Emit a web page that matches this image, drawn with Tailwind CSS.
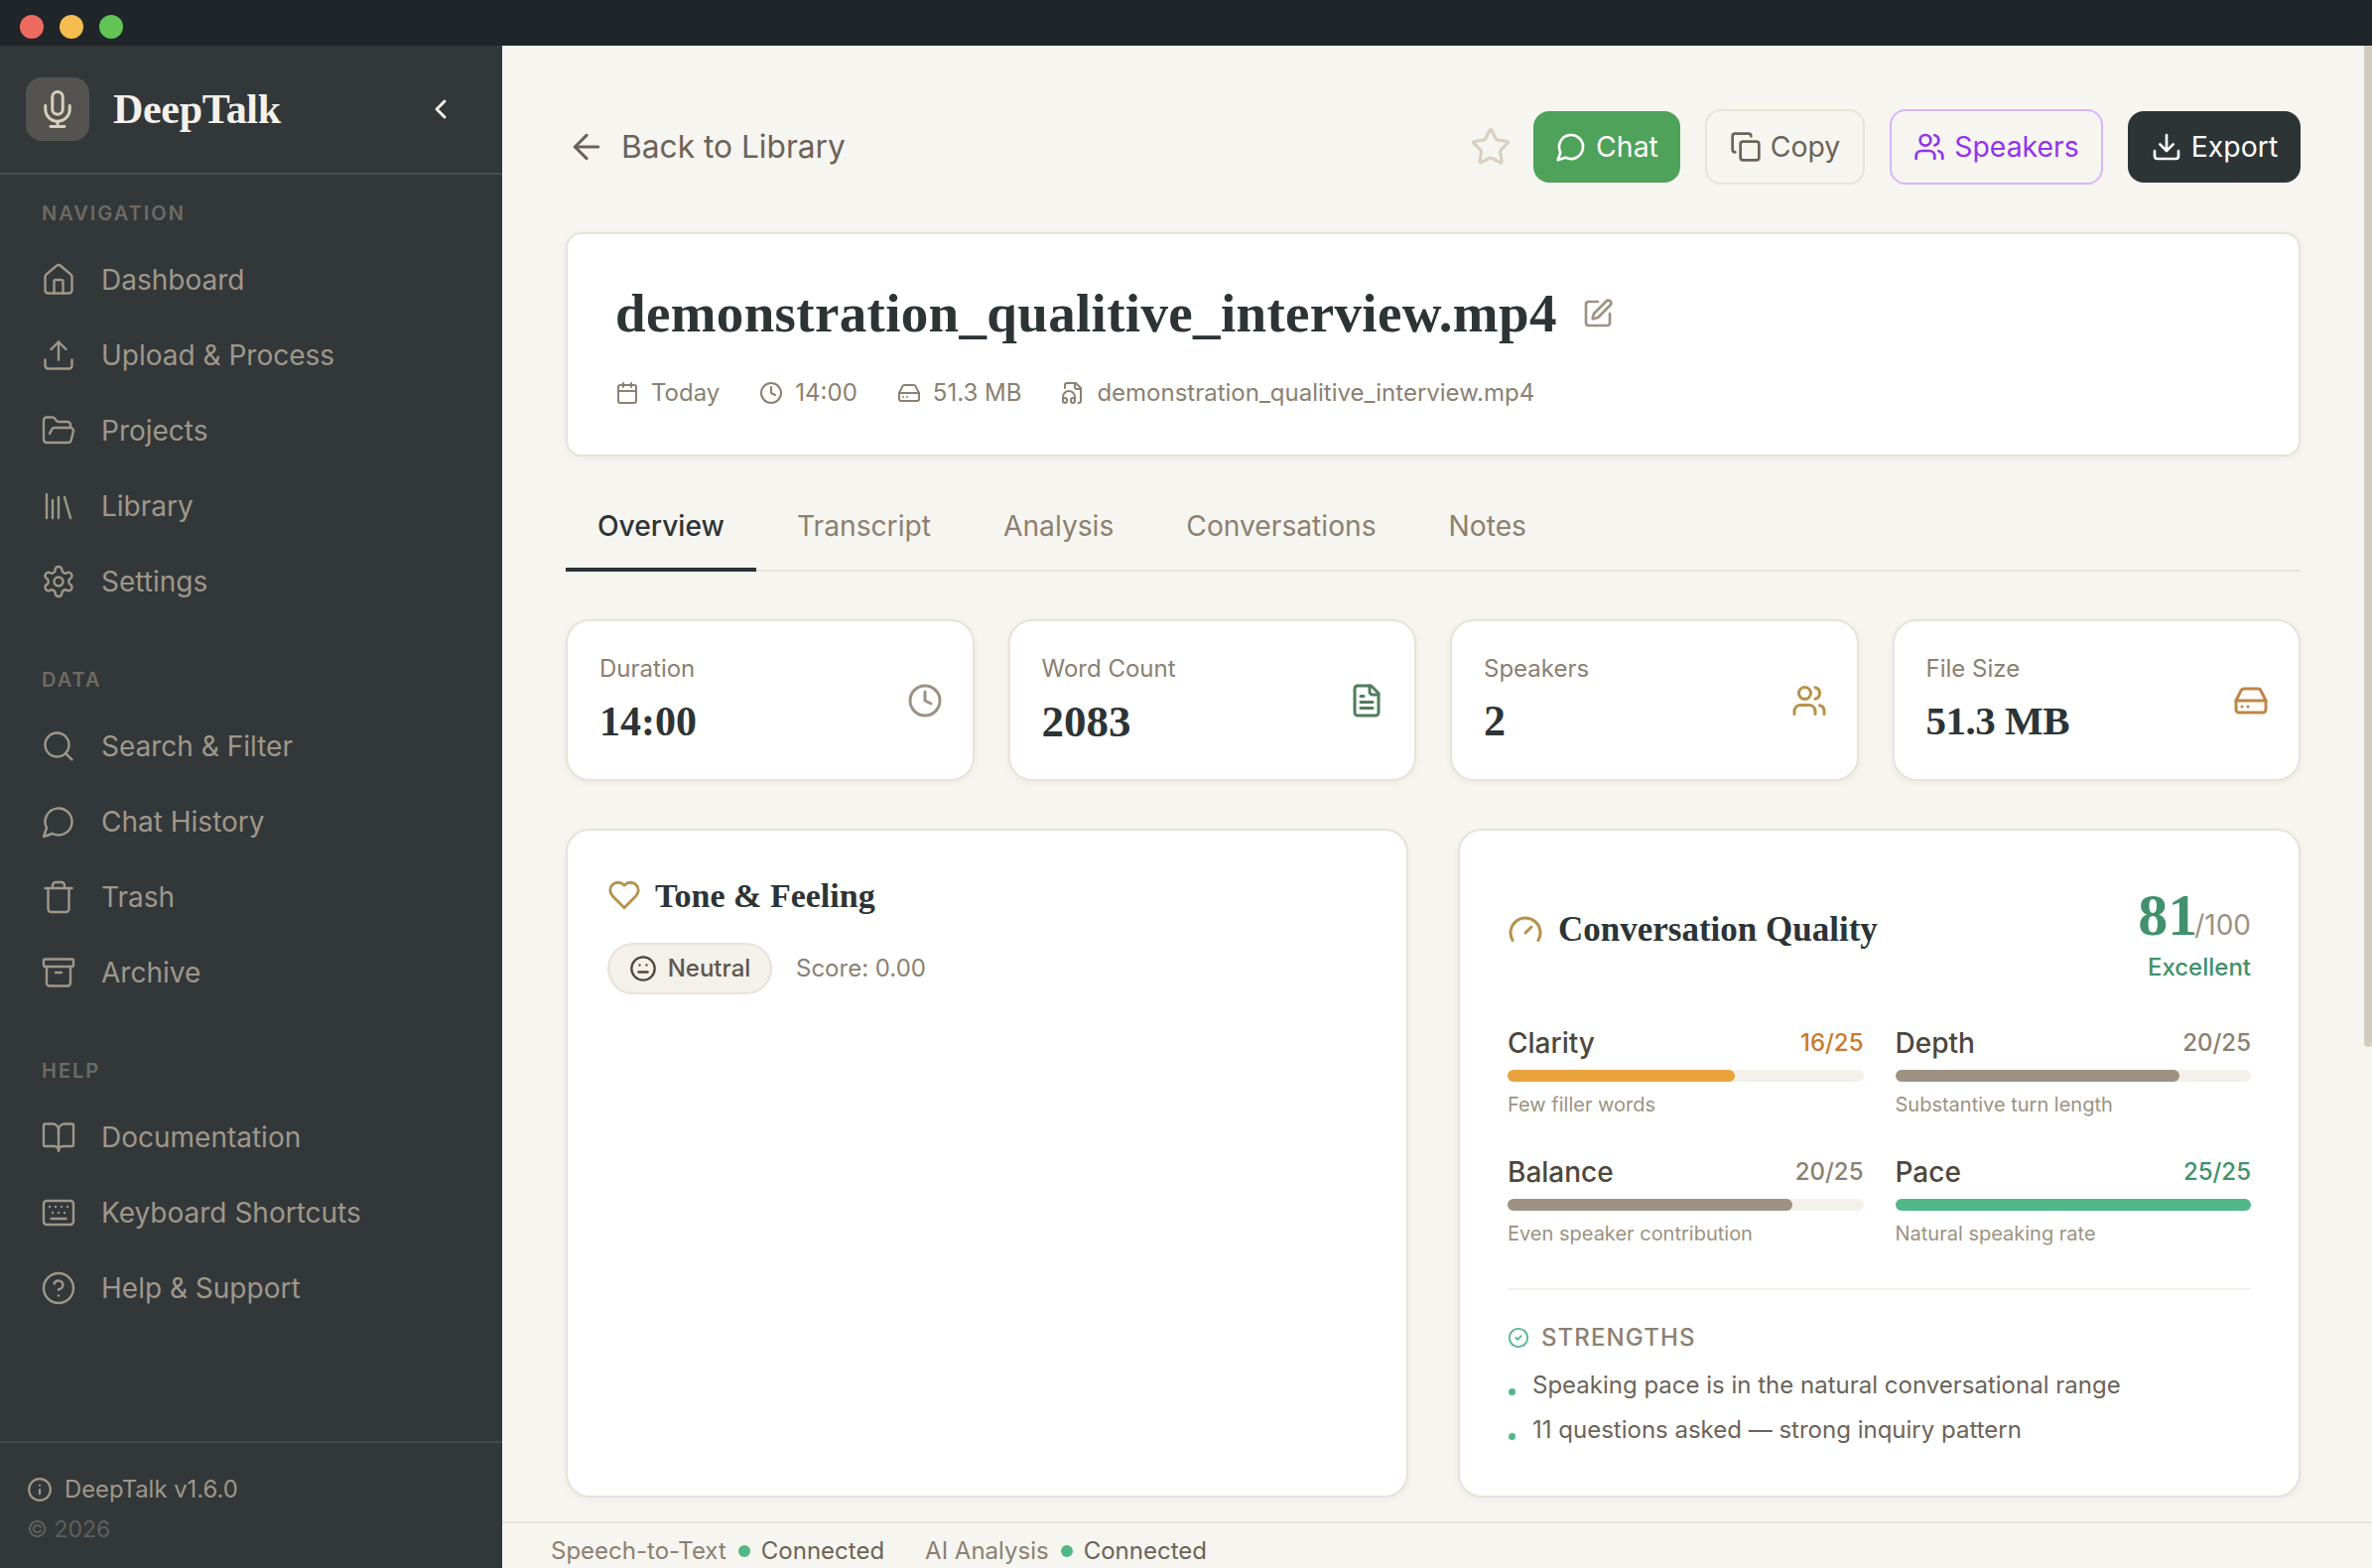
<!DOCTYPE html>
<html lang="en">
<head>
  <meta charset="UTF-8" />
  <title>DeepTalk</title>
  <script src="https://cdn.jsdelivr.net/npm/@tailwindcss/browser@4"></script>
</head>
<body class="w-[2390px] h-[1580px] overflow-hidden bg-[#f7f5f0] font-['Inter',sans-serif]">
  <!-- Title bar -->
  <div class="h-[46px] bg-[#1f2528] flex items-start gap-[16px] pl-[20px] pt-[15px]">
    <span class="w-[24px] h-[24px] rounded-full bg-[#ee6a5f]"></span>
    <span class="w-[24px] h-[24px] rounded-full bg-[#f5bd4f]"></span>
    <span class="w-[24px] h-[24px] rounded-full bg-[#61c454]"></span>
  </div>

  <div class="flex h-[1534px]">
    <!-- Sidebar -->
    <aside class="w-[506px] shrink-0 bg-[#32373a] flex flex-col">
      <div class="h-[130px] shrink-0 border-b-2 border-[#464b4e] flex items-center pl-[26px] pr-[46px]">
        <div class="w-[64px] h-[64px] rounded-[16px] bg-[#54534f] flex items-center justify-center">
          <svg class="w-[42px] h-[42px] text-[#d8cfbc]" viewBox="0 0 24 24" fill="none" stroke="currentColor" stroke-width="1.7" stroke-linecap="round" stroke-linejoin="round"><path d="M12 2a3 3 0 0 0-3 3v7a3 3 0 0 0 6 0V5a3 3 0 0 0-3-3Z"/><path d="M19 10v2a7 7 0 0 1-14 0v-2"/><path d="M12 19v3"/><path d="M8 22h8"/></svg>
        </div>
        <span class="ml-[24px] flex-1 font-['Liberation_Serif',serif] font-bold text-[42px] tracking-[-0.3px] leading-none text-[#f5f1ea]">DeepTalk</span>
        <svg class="w-[32px] h-[32px] text-[#f5f1ea]" viewBox="0 0 24 24" fill="none" stroke="currentColor" stroke-width="2.2" stroke-linecap="round" stroke-linejoin="round"><path d="m15 18-6-6 6-6"/></svg>
      </div>

      <nav class="flex-1 pt-[25px] text-[#a09789] text-[28px]">
        <div class="h-[28px] leading-[28px] pl-[42px] mb-[15px] text-[20px] font-semibold tracking-[2px] text-[#6e6a62]">NAVIGATION</div>
        <a class="h-[76px] flex items-center pl-[41px] gap-[25px]"><svg class="w-[36px] h-[36px]" viewBox="0 0 24 24" fill="none" stroke="currentColor" stroke-width="1.6" stroke-linecap="round" stroke-linejoin="round"><path d="M15 21v-8a1 1 0 0 0-1-1h-4a1 1 0 0 0-1 1v8"/><path d="M3 10a2 2 0 0 1 .709-1.528l7-5.999a2 2 0 0 1 2.582 0l7 5.999A2 2 0 0 1 21 10v9a2 2 0 0 1-2 2H5a2 2 0 0 1-2-2z"/></svg>Dashboard</a>
        <a class="h-[76px] flex items-center pl-[41px] gap-[25px]"><svg class="w-[36px] h-[36px]" viewBox="0 0 24 24" fill="none" stroke="currentColor" stroke-width="1.6" stroke-linecap="round" stroke-linejoin="round"><path d="M21 15v4a2 2 0 0 1-2 2H5a2 2 0 0 1-2-2v-4"/><path d="M17 8l-5-5-5 5"/><path d="M12 3v12"/></svg>Upload &amp; Process</a>
        <a class="h-[76px] flex items-center pl-[41px] gap-[25px]"><svg class="w-[36px] h-[36px]" viewBox="0 0 24 24" fill="none" stroke="currentColor" stroke-width="1.6" stroke-linecap="round" stroke-linejoin="round"><path d="m6 14 1.5-2.9A2 2 0 0 1 9.24 10H20a2 2 0 0 1 1.94 2.5l-1.54 6a2 2 0 0 1-1.95 1.5H4a2 2 0 0 1-2-2V5a2 2 0 0 1 2-2h3.9a2 2 0 0 1 1.69.9l.81 1.2a2 2 0 0 0 1.67.9H18a2 2 0 0 1 2 2v2"/></svg>Projects</a>
        <a class="h-[76px] flex items-center pl-[41px] gap-[25px]"><svg class="w-[36px] h-[36px]" viewBox="0 0 24 24" fill="none" stroke="currentColor" stroke-width="1.6" stroke-linecap="round" stroke-linejoin="round"><path d="m16 6 4 14"/><path d="M12 6v14"/><path d="M8 8v12"/><path d="M4 4v16"/></svg>Library</a>
        <a class="h-[76px] flex items-center pl-[41px] gap-[25px]"><svg class="w-[36px] h-[36px]" viewBox="0 0 24 24" fill="none" stroke="currentColor" stroke-width="1.6" stroke-linecap="round" stroke-linejoin="round"><path d="M12.22 2h-.44a2 2 0 0 0-2 2v.18a2 2 0 0 1-1 1.73l-.43.25a2 2 0 0 1-2 0l-.15-.08a2 2 0 0 0-2.73.73l-.22.38a2 2 0 0 0 .73 2.73l.15.1a2 2 0 0 1 1 1.72v.51a2 2 0 0 1-1 1.74l-.15.09a2 2 0 0 0-.73 2.73l.22.38a2 2 0 0 0 2.73.73l.15-.08a2 2 0 0 1 2 0l.43.25a2 2 0 0 1 1 1.73V20a2 2 0 0 0 2 2h.44a2 2 0 0 0 2-2v-.18a2 2 0 0 1 1-1.73l.43-.25a2 2 0 0 1 2 0l.15.08a2 2 0 0 0 2.73-.73l.22-.39a2 2 0 0 0-.73-2.73l-.15-.08a2 2 0 0 1-1-1.74v-.5a2 2 0 0 1 1-1.74l.15-.09a2 2 0 0 0 .73-2.73l-.22-.38a2 2 0 0 0-2.73-.73l-.15.08a2 2 0 0 1-2 0l-.43-.25a2 2 0 0 1-1-1.73V4a2 2 0 0 0-2-2z"/><circle cx="12" cy="12" r="3"/></svg>Settings</a>

        <div class="h-[28px] leading-[28px] pl-[42px] mt-[47px] mb-[15px] text-[20px] font-semibold tracking-[2px] text-[#6e6a62]">DATA</div>
        <a class="h-[76px] flex items-center pl-[41px] gap-[25px]"><svg class="w-[36px] h-[36px]" viewBox="0 0 24 24" fill="none" stroke="currentColor" stroke-width="1.6" stroke-linecap="round" stroke-linejoin="round"><circle cx="11" cy="11" r="8"/><path d="m21 21-4.3-4.3"/></svg>Search &amp; Filter</a>
        <a class="h-[76px] flex items-center pl-[41px] gap-[25px]"><svg class="w-[36px] h-[36px]" viewBox="0 0 24 24" fill="none" stroke="currentColor" stroke-width="1.6" stroke-linecap="round" stroke-linejoin="round"><path d="M7.9 20A9 9 0 1 0 4 16.1L2 22Z"/></svg>Chat History</a>
        <a class="h-[76px] flex items-center pl-[41px] gap-[25px]"><svg class="w-[36px] h-[36px]" viewBox="0 0 24 24" fill="none" stroke="currentColor" stroke-width="1.6" stroke-linecap="round" stroke-linejoin="round"><path d="M3 6h18"/><path d="M19 6v14c0 1-1 2-2 2H7c-1 0-2-1-2-2V6"/><path d="M8 6V4c0-1 1-2 2-2h4c1 0 2 1 2 2v2"/></svg>Trash</a>
        <a class="h-[76px] flex items-center pl-[41px] gap-[25px]"><svg class="w-[36px] h-[36px]" viewBox="0 0 24 24" fill="none" stroke="currentColor" stroke-width="1.6" stroke-linecap="round" stroke-linejoin="round"><rect x="2" y="3" width="20" height="5" rx="1"/><path d="M4 8v11a2 2 0 0 0 2 2h12a2 2 0 0 0 2-2V8"/><path d="M10 12h4"/></svg>Archive</a>

        <div class="h-[28px] leading-[28px] pl-[42px] mt-[47px] mb-[15px] text-[20px] font-semibold tracking-[2px] text-[#6e6a62]">HELP</div>
        <a class="h-[76px] flex items-center pl-[41px] gap-[25px]"><svg class="w-[36px] h-[36px]" viewBox="0 0 24 24" fill="none" stroke="currentColor" stroke-width="1.6" stroke-linecap="round" stroke-linejoin="round"><path d="M12 7v14"/><path d="M3 18a1 1 0 0 1-1-1V4a1 1 0 0 1 1-1h5a4 4 0 0 1 4 4 4 4 0 0 1 4-4h5a1 1 0 0 1 1 1v13a1 1 0 0 1-1 1h-6a3 3 0 0 0-3 3 3 3 0 0 0-3-3z"/></svg>Documentation</a>
        <a class="h-[76px] flex items-center pl-[41px] gap-[25px]"><svg class="w-[36px] h-[36px]" viewBox="0 0 24 24" fill="none" stroke="currentColor" stroke-width="1.6" stroke-linecap="round" stroke-linejoin="round"><path d="M10 8h.01"/><path d="M12 12h.01"/><path d="M14 8h.01"/><path d="M16 12h.01"/><path d="M18 8h.01"/><path d="M6 8h.01"/><path d="M7 16h10"/><path d="M8 12h.01"/><rect x="2" y="4" width="20" height="16" rx="2"/></svg>Keyboard Shortcuts</a>
        <a class="h-[76px] flex items-center pl-[41px] gap-[25px]"><svg class="w-[36px] h-[36px]" viewBox="0 0 24 24" fill="none" stroke="currentColor" stroke-width="1.6" stroke-linecap="round" stroke-linejoin="round"><circle cx="12" cy="12" r="10"/><path d="M9.09 9a3 3 0 0 1 5.83 1c0 2-3 3-3 3"/><path d="M12 17h.01"/></svg>Help &amp; Support</a>
      </nav>

      <div class="h-[128px] shrink-0 border-t-2 border-[#464b4e] pt-[27px] pl-[27px] text-[23.8px] leading-[40px]">
        <div class="flex items-center gap-[12px] text-[#a09789]">
          <svg class="w-[26px] h-[26px]" viewBox="0 0 24 24" fill="none" stroke="currentColor" stroke-width="2" stroke-linecap="round" stroke-linejoin="round"><circle cx="12" cy="12" r="10"/><path d="M12 16v-4"/><path d="M12 8h.01"/></svg>
          DeepTalk v1.6.0
        </div>
        <div class="text-[23px] text-[#605f5b]">© 2026</div>
      </div>
    </aside>

    <!-- Main -->
    <main class="flex-1 flex flex-col relative">
      <div class="absolute top-0 right-0 w-[8px] h-[1009px] bg-[#d2ccbf] rounded-b-[4px]"></div>

      <div class="flex-1 pt-[64px] pl-[64px] pr-[72px]">
        <!-- Header row -->
        <div class="h-[76px] flex items-center">
          <svg class="w-[40px] h-[40px] text-[#6b6358] ml-[1px]" viewBox="0 0 24 24" fill="none" stroke="currentColor" stroke-width="1.9" stroke-linecap="round" stroke-linejoin="round"><path d="m12 19-7-7 7-7"/><path d="M19 12H5"/></svg>
          <span class="ml-[15px] flex-1 text-[31.7px] text-[#6b6358]">Back to Library</span>
          <svg class="w-[42px] h-[42px] text-[#d8d0c2] mr-[22px]" viewBox="0 0 24 24" fill="none" stroke="currentColor" stroke-width="1.8" stroke-linecap="round" stroke-linejoin="round"><path d="M11.525 2.295a.53.53 0 0 1 .95 0l2.31 4.679a2.123 2.123 0 0 0 1.595 1.16l5.166.756a.53.53 0 0 1 .294.904l-3.736 3.638a2.123 2.123 0 0 0-.611 1.878l.882 5.14a.53.53 0 0 1-.771.56l-4.618-2.428a2.122 2.122 0 0 0-1.973 0L6.396 21.01a.53.53 0 0 1-.77-.56l.881-5.139a2.122 2.122 0 0 0-.611-1.879L2.16 9.795a.53.53 0 0 1 .294-.906l5.165-.755a2.122 2.122 0 0 0 1.597-1.16z"/></svg>
          <div class="flex items-center gap-[25px] text-[28.4px]">
            <button class="w-[148px] h-[72px] rounded-[16px] bg-[#4ea259] text-white flex items-center justify-center gap-[9px]">
              <svg class="w-[32px] h-[32px]" viewBox="0 0 24 24" fill="none" stroke="currentColor" stroke-width="2" stroke-linecap="round" stroke-linejoin="round"><path d="M7.9 20A9 9 0 1 0 4 16.1L2 22Z"/></svg>Chat
            </button>
            <button class="w-[161px] h-[76px] rounded-[16px] border-2 border-[#e8e2d8] text-[#6b6358] flex items-center justify-center gap-[9px]">
              <svg class="w-[32px] h-[32px]" viewBox="0 0 24 24" fill="none" stroke="currentColor" stroke-width="2" stroke-linecap="round" stroke-linejoin="round"><rect x="8" y="8" width="14" height="14" rx="2"/><path d="M4 16c-1.1 0-2-.9-2-2V4c0-1.1.9-2 2-2h10c1.1 0 2 .9 2 2"/></svg>Copy
            </button>
            <button class="w-[215px] h-[76px] rounded-[16px] border-2 border-[#d8b4fe] text-[#9333ea] flex items-center justify-center gap-[9px]">
              <svg class="w-[32px] h-[32px]" viewBox="0 0 24 24" fill="none" stroke="currentColor" stroke-width="2" stroke-linecap="round" stroke-linejoin="round"><path d="M16 21v-2a4 4 0 0 0-4-4H6a4 4 0 0 0-4 4v2"/><circle cx="9" cy="7" r="4"/><path d="M22 21v-2a4 4 0 0 0-3-3.87"/><path d="M16 3.13a4 4 0 0 1 0 7.75"/></svg>Speakers
            </button>
            <button class="w-[174px] h-[72px] rounded-[16px] bg-[#2d3436] text-white flex items-center justify-center gap-[9px]">
              <svg class="w-[32px] h-[32px]" viewBox="0 0 24 24" fill="none" stroke="currentColor" stroke-width="2" stroke-linecap="round" stroke-linejoin="round"><path d="M21 15v4a2 2 0 0 1-2 2H5a2 2 0 0 1-2-2v-4"/><path d="m7 10 5 5 5-5"/><path d="M12 15V3"/></svg>Export
            </button>
          </div>
        </div>

        <!-- File card -->
        <div class="mt-[48px] h-[226px] rounded-[16px] bg-white border-2 border-[#e8e2d8] shadow-[0_2px_6px_rgba(120,100,70,0.08)] pt-[47px] px-[48px]">
          <div class="h-[66px] flex items-center gap-[25px]">
            <h1 class="font-['Liberation_Serif',serif] font-bold text-[55px] tracking-[0.33px] leading-none pb-[2px] text-[#2d3436]">demonstration_qualitive_interview.mp4</h1>
            <svg class="w-[32px] h-[32px] text-[#9c9282]" viewBox="0 0 24 24" fill="none" stroke="currentColor" stroke-width="2" stroke-linecap="round" stroke-linejoin="round"><path d="M12 3H5a2 2 0 0 0-2 2v14a2 2 0 0 0 2 2h14a2 2 0 0 0 2-2v-7"/><path d="M18.375 2.625a1 1 0 0 1 3 3l-9.013 9.014a2 2 0 0 1-.853.505l-2.873.84a.5.5 0 0 1-.62-.62l.84-2.873a2 2 0 0 1 .506-.852z"/></svg>
          </div>
          <div class="mt-[29px] h-[36px] flex items-center text-[24px] text-[#8b8071]">
            <svg class="w-[24px] h-[24px] mr-[12px]" viewBox="0 0 24 24" fill="none" stroke="currentColor" stroke-width="2" stroke-linecap="round" stroke-linejoin="round"><path d="M8 2v4"/><path d="M16 2v4"/><rect x="3" y="4" width="18" height="18" rx="2"/><path d="M3 10h18"/></svg>
            <span>Today</span>
            <svg class="w-[24px] h-[24px] ml-[40px] mr-[12px]" viewBox="0 0 24 24" fill="none" stroke="currentColor" stroke-width="2" stroke-linecap="round" stroke-linejoin="round"><circle cx="12" cy="12" r="10"/><path d="M12 6v6l4 2"/></svg>
            <span>14:00</span>
            <svg class="w-[24px] h-[24px] ml-[40px] mr-[12px]" viewBox="0 0 24 24" fill="none" stroke="currentColor" stroke-width="2" stroke-linecap="round" stroke-linejoin="round"><path d="M22 12H2"/><path d="M5.45 5.11 2 12v6a2 2 0 0 0 2 2h16a2 2 0 0 0 2-2v-6l-3.45-6.89A2 2 0 0 0 16.76 4H7.24a2 2 0 0 0-1.79 1.11z"/><path d="M6 16h.01"/><path d="M10 16h.01"/></svg>
            <span>51.3 MB</span>
            <svg class="w-[24px] h-[24px] ml-[40px] mr-[12px]" viewBox="0 0 24 24" fill="none" stroke="currentColor" stroke-width="2" stroke-linecap="round" stroke-linejoin="round"><path d="M17.5 22h.5a2 2 0 0 0 2-2V7l-5-5H6a2 2 0 0 0-2 2v3"/><path d="M14 2v4a2 2 0 0 0 2 2h4"/><path d="M2 19a2 2 0 1 1 4 0v1a2 2 0 1 1-4 0v-4a6 6 0 0 1 12 0v4a2 2 0 1 1-4 0v-1a2 2 0 1 1 4 0"/></svg>
            <span>demonstration_qualitive_interview.mp4</span>
          </div>
        </div>

        <!-- Tabs -->
        <div class="mt-[40px] h-[76px] border-b-2 border-[#e8e2d8] flex gap-[9px] text-[28.2px] text-[#8b8071]">
          <div class="h-[76px] px-[32px] pb-[11px] flex items-center border-b-4 border-[#2d3436] text-[#2d3436] font-medium">Overview</div>
          <div class="h-[76px] px-[32px] pb-[11px] flex items-center border-b-4 border-transparent">Transcript</div>
          <div class="h-[76px] px-[32px] pb-[11px] flex items-center border-b-4 border-transparent">Analysis</div>
          <div class="h-[76px] px-[32px] pb-[11px] flex items-center border-b-4 border-transparent">Conversations</div>
          <div class="h-[76px] px-[32px] pb-[11px] flex items-center border-b-4 border-transparent">Notes</div>
        </div>

        <!-- Stats -->
        <div class="mt-[48px] grid grid-cols-4 gap-[34px]">
          <div class="h-[163px] rounded-[24px] bg-white border-2 border-[#e8e2d8] shadow-[0_2px_6px_rgba(120,100,70,0.08)] pl-[32px] pr-[30px] flex items-center justify-between">
            <div>
              <div class="text-[24px] leading-[32px] text-[#8b8071]">Duration</div>
              <div class="mt-[10px] font-['Liberation_Serif',serif] font-bold text-[42px] leading-[54px] text-[#2d3436]">14:00</div>
            </div>
            <svg class="w-[36px] h-[36px] text-[#9c9282]" viewBox="0 0 24 24" fill="none" stroke="currentColor" stroke-width="2" stroke-linecap="round" stroke-linejoin="round"><circle cx="12" cy="12" r="10"/><path d="M12 6v6l4 2"/></svg>
          </div>
          <div class="h-[163px] rounded-[24px] bg-white border-2 border-[#e8e2d8] shadow-[0_2px_6px_rgba(120,100,70,0.08)] pl-[32px] pr-[30px] flex items-center justify-between">
            <div>
              <div class="text-[24px] leading-[32px] text-[#8b8071]">Word Count</div>
              <div class="mt-[10px] font-['Liberation_Serif',serif] font-bold text-[45px] leading-[54px] text-[#2d3436]">2083</div>
            </div>
            <svg class="w-[36px] h-[36px] text-[#4f7d5c]" viewBox="0 0 24 24" fill="none" stroke="currentColor" stroke-width="2" stroke-linecap="round" stroke-linejoin="round"><path d="M15 2H6a2 2 0 0 0-2 2v16a2 2 0 0 0 2 2h12a2 2 0 0 0 2-2V7Z"/><path d="M14 2v4a2 2 0 0 0 2 2h4"/><path d="M10 9H8"/><path d="M16 13H8"/><path d="M16 17H8"/></svg>
          </div>
          <div class="h-[163px] rounded-[24px] bg-white border-2 border-[#e8e2d8] shadow-[0_2px_6px_rgba(120,100,70,0.08)] pl-[32px] pr-[30px] flex items-center justify-between">
            <div>
              <div class="text-[24px] leading-[32px] text-[#8b8071]">Speakers</div>
              <div class="mt-[10px] font-['Liberation_Serif',serif] font-bold text-[44px] leading-[54px] text-[#2d3436]">2</div>
            </div>
            <svg class="w-[36px] h-[36px] text-[#b5924c]" viewBox="0 0 24 24" fill="none" stroke="currentColor" stroke-width="2" stroke-linecap="round" stroke-linejoin="round"><path d="M16 21v-2a4 4 0 0 0-4-4H6a4 4 0 0 0-4 4v2"/><circle cx="9" cy="7" r="4"/><path d="M22 21v-2a4 4 0 0 0-3-3.87"/><path d="M16 3.13a4 4 0 0 1 0 7.75"/></svg>
          </div>
          <div class="h-[163px] rounded-[24px] bg-white border-2 border-[#e8e2d8] shadow-[0_2px_6px_rgba(120,100,70,0.08)] pl-[32px] pr-[30px] flex items-center justify-between">
            <div>
              <div class="text-[24px] leading-[32px] text-[#8b8071]">File Size</div>
              <div class="mt-[10px] font-['Liberation_Serif',serif] font-bold text-[41px] tracking-[-0.5px] leading-[52px] pb-[2px] text-[#2d3436]">51.3 MB</div>
            </div>
            <svg class="w-[36px] h-[36px] text-[#bf8546]" viewBox="0 0 24 24" fill="none" stroke="currentColor" stroke-width="2" stroke-linecap="round" stroke-linejoin="round"><path d="M22 12H2"/><path d="M5.45 5.11 2 12v6a2 2 0 0 0 2 2h16a2 2 0 0 0 2-2v-6l-3.45-6.89A2 2 0 0 0 16.76 4H7.24a2 2 0 0 0-1.79 1.11z"/><path d="M6 16h.01"/><path d="M10 16h.01"/></svg>
          </div>
        </div>

        <!-- Panels -->
        <div class="mt-[48px] flex justify-between">
          <section class="w-[849px] h-[674px] rounded-[24px] bg-white border-2 border-[#e8e2d8] shadow-[0_2px_6px_rgba(120,100,70,0.08)] pt-[40px] pl-[40px]">
            <div class="h-[50px] flex items-center gap-[14px]">
              <svg class="w-[34px] h-[34px] text-[#b5924c]" viewBox="0 0 24 24" fill="none" stroke="currentColor" stroke-width="2" stroke-linecap="round" stroke-linejoin="round"><path d="M19 14c1.49-1.46 3-3.21 3-5.5A5.5 5.5 0 0 0 16.5 3c-1.76 0-3 .5-4.5 2-1.5-1.5-2.74-2-4.5-2A5.5 5.5 0 0 0 2 8.5c0 2.3 1.5 4.05 3 5.5l7 7Z"/></svg>
              <h2 class="font-['Liberation_Serif',serif] font-bold text-[34px] text-[#2d3436]">Tone &amp; Feeling</h2>
            </div>
            <div class="mt-[23px] flex items-center gap-[24px] text-[24px]">
              <div class="h-[52px] w-[166px] rounded-full bg-[#f4f0ea] border-2 border-[#e8e2d8] flex items-center justify-center gap-[11px] font-medium text-[#5f574c]">
                <svg class="w-[28px] h-[28px] text-[#4e473d]" viewBox="0 0 24 24" fill="none" stroke="currentColor" stroke-width="2" stroke-linecap="round" stroke-linejoin="round"><circle cx="12" cy="12" r="10"/><path d="M8 15h8"/><path d="M9 9h.01"/><path d="M15 9h.01"/></svg>
                Neutral
              </div>
              <span class="text-[#8b8071]">Score: 0.00</span>
            </div>
          </section>

          <section class="w-[849px] h-[674px] rounded-[24px] bg-white border-2 border-[#e8e2d8] shadow-[0_2px_6px_rgba(120,100,70,0.08)] pt-[46px] px-[48px]">
            <div class="flex items-center justify-between">
              <div class="flex items-center gap-[15px] mt-[3px]">
                <svg class="w-[36px] h-[36px] text-[#b5924c]" viewBox="0 0 24 24" fill="none" stroke="currentColor" stroke-width="2" stroke-linecap="round" stroke-linejoin="round"><path d="m12 14 4-4"/><path d="M3.34 19a10 10 0 1 1 17.32 0"/></svg>
                <h2 class="font-['Liberation_Serif',serif] font-bold text-[35px] text-[#2d3436]">Conversation Quality</h2>
              </div>
              <div class="text-right">
                <div class="h-[78px] leading-[78px]"><span class="font-['Liberation_Serif',serif] font-bold text-[60px] mr-[-3px] text-[#40916c]">81</span><span class="text-[28px] text-[#9c9282]">/100</span></div>
                <div class="h-[27px] leading-[27px] text-[24px] font-medium text-[#40916c]">Excellent</div>
              </div>
            </div>

            <div class="mt-[45px] grid grid-cols-2 gap-x-[32px] gap-y-[36px]">
              <div>
                <div class="h-[36px] flex items-center justify-between"><span class="text-[28px] font-medium text-[#4e473d]">Clarity</span><span class="text-[24px] font-medium text-[#c97a2b]">16/25</span></div>
                <div class="mt-[9px] h-[12px] rounded-full bg-[#f4f0ea]"><div class="h-full rounded-full bg-[#e9a23b]" style="width:64%"></div></div>
                <div class="mt-[9px] h-[28px] leading-[28px] text-[20px] text-[#9c9282]">Few filler words</div>
              </div>
              <div>
                <div class="h-[36px] flex items-center justify-between"><span class="text-[28px] font-medium text-[#4e473d]">Depth</span><span class="text-[24px] font-medium text-[#8b8071]">20/25</span></div>
                <div class="mt-[9px] h-[12px] rounded-full bg-[#f4f0ea]"><div class="h-full rounded-full bg-[#9e9282]" style="width:80%"></div></div>
                <div class="mt-[9px] h-[28px] leading-[28px] text-[20px] text-[#9c9282]">Substantive turn length</div>
              </div>
              <div>
                <div class="h-[36px] flex items-center justify-between"><span class="text-[28px] font-medium text-[#4e473d]">Balance</span><span class="text-[24px] font-medium text-[#8b8071]">20/25</span></div>
                <div class="mt-[9px] h-[12px] rounded-full bg-[#f4f0ea]"><div class="h-full rounded-full bg-[#9e9282]" style="width:80%"></div></div>
                <div class="mt-[9px] h-[28px] leading-[28px] text-[20px] text-[#9c9282]">Even speaker contribution</div>
              </div>
              <div>
                <div class="h-[36px] flex items-center justify-between"><span class="text-[28px] font-medium text-[#4e473d]">Pace</span><span class="text-[24px] font-medium text-[#40916c]">25/25</span></div>
                <div class="mt-[9px] h-[12px] rounded-full bg-[#f4f0ea]"><div class="h-full rounded-full bg-[#52b788]" style="width:100%"></div></div>
                <div class="mt-[9px] h-[28px] leading-[28px] text-[20px] text-[#9c9282]">Natural speaking rate</div>
              </div>
            </div>

            <div class="mt-[41px] border-t-2 border-[#f4f0ea] pt-[34px]">
              <div class="h-[28px] flex items-center gap-[12px] text-[24px] font-medium tracking-[1.1px] text-[#8b8071]">
                <svg class="w-[22px] h-[22px] text-[#52b788]" viewBox="0 0 24 24" fill="none" stroke="currentColor" stroke-width="2" stroke-linecap="round" stroke-linejoin="round"><circle cx="12" cy="12" r="10"/><path d="m9 12 2 2 4-4"/></svg>
                STRENGTHS
              </div>
              <ul class="mt-[16px] space-y-[9px] text-[24px] text-[#6b6358]">
                <li class="h-[36px] flex items-center gap-[17px]"><span class="w-[7px] h-[7px] ml-[1px] mt-[12px] rounded-full bg-[#52b788]"></span>Speaking pace is in the natural conversational range</li>
                <li class="h-[36px] flex items-center gap-[17px]"><span class="w-[7px] h-[7px] ml-[1px] mt-[12px] rounded-full bg-[#52b788]"></span>11 questions asked — strong inquiry pattern</li>
              </ul>
            </div>
          </section>
        </div>
      </div>

      <!-- Status bar -->
      <div class="h-[47px] shrink-0 border-t-2 border-[#e8e2d8] pl-[49px] pt-[10px] flex items-center text-[24px]">
        <span class="text-[#8b8071]">Speech-to-Text</span>
        <span class="w-[12px] h-[12px] ml-[12px] mr-[11px] rounded-full bg-[#52b788]"></span>
        <span class="text-[#6b6358]">Connected</span>
        <span class="ml-[41px] text-[#8b8071]">AI Analysis</span>
        <span class="w-[12px] h-[12px] ml-[12px] mr-[11px] rounded-full bg-[#52b788]"></span>
        <span class="text-[#6b6358]">Connected</span>
      </div>
    </main>
  </div>
</body>
</html>
